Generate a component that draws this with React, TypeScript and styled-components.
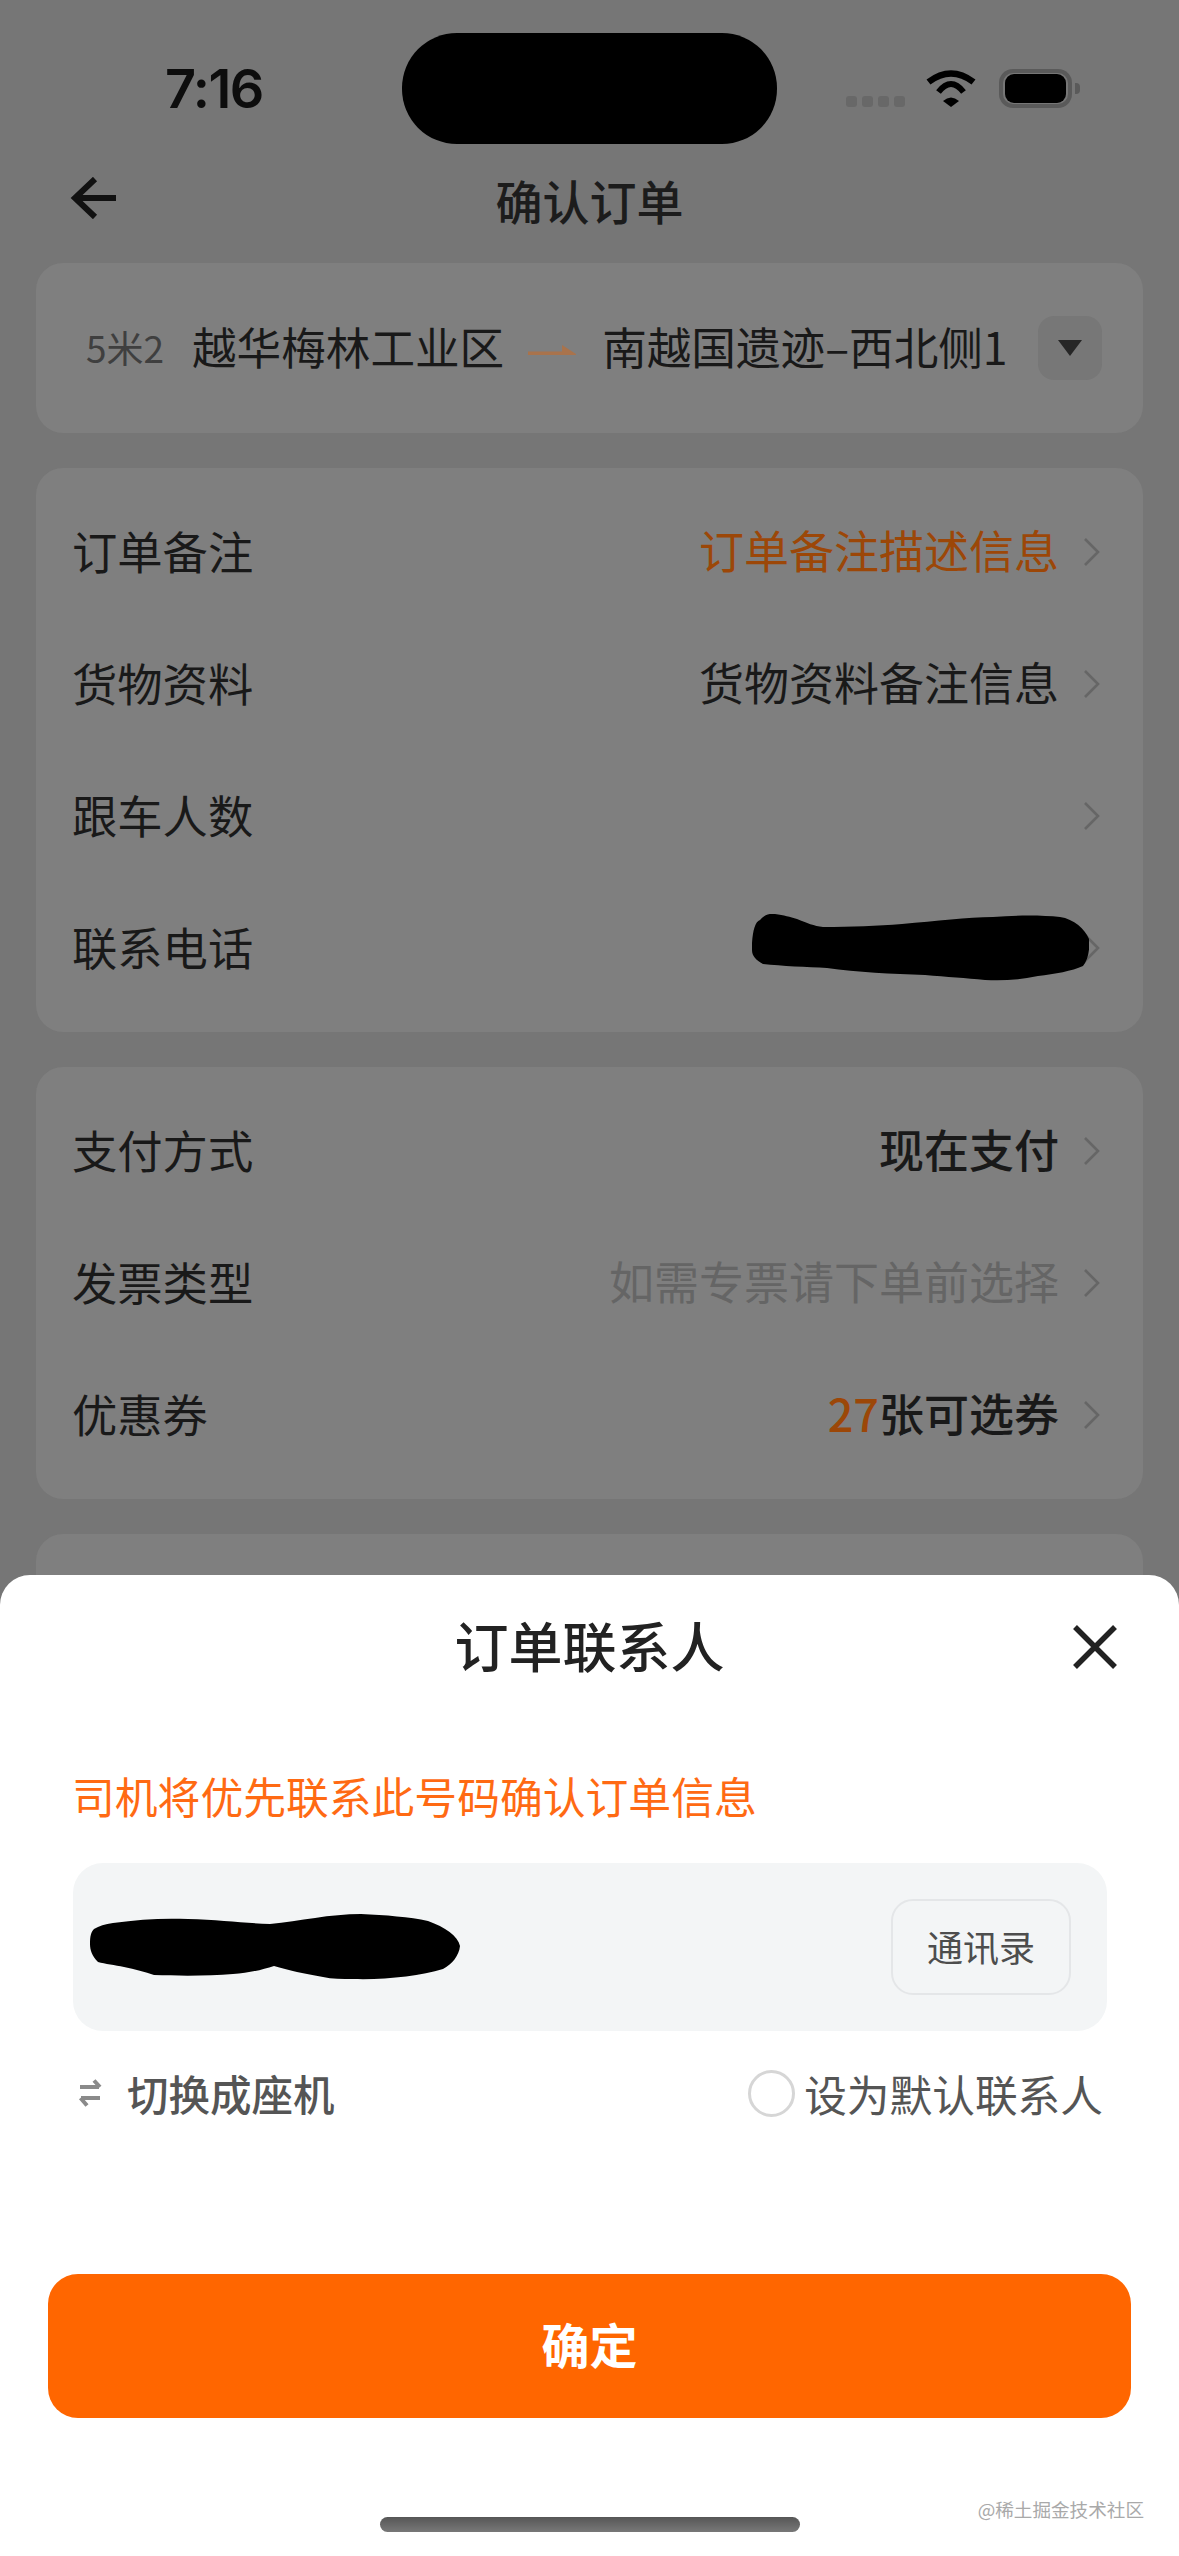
import React from "react";
import styled, { createGlobalStyle } from "styled-components";

const Global = createGlobalStyle`
  html, body { margin: 0; padding: 0; background: #767676; }
  * { box-sizing: border-box; }
  body { font-family: "Noto Sans CJK SC", "Noto Sans", sans-serif; }
`;

const Screen = styled.div`
  position: relative;
  width: 1179px;
  height: 2556px;
  overflow: hidden;
  background: #767676;
  color: #141414;
`;

/* ---------- status bar ---------- */
const StatusBar = styled.div`
  display: flex;
  align-items: center;
  height: 144px;
  padding-top: 33px;
`;
const Time = styled.div`
  width: 402px;
  padding-left: 165px;
  font-family: Inter, "Liberation Sans", sans-serif;
  font-size: 54px;
  font-weight: 600;
  letter-spacing: -1.5px;
  line-height: 1;
  color: #0d0d0d;
`;
const Island = styled.div`
  width: 375px;
  height: 111px;
  border-radius: 55px;
  background: #000;
`;
const StatusIcons = styled.div`
  display: flex;
  align-items: center;
  gap: 23px;
  padding-left: 69px;
`;
const SignalDots = styled.div`
  display: flex;
  gap: 5px;
  margin: 26px -2px 0 0;
`;
const SignalDot = styled.span`
  width: 11px;
  height: 11px;
  border-radius: 3px;
  background: #686868;
`;
const Battery = styled.div`
  position: relative;
  width: 73px;
  height: 39px;
  padding: 5px 6px;
  border-radius: 14px;
  box-shadow: inset 0 0 0 4px #5a5a5a;
`;
const BatteryFill = styled.div`
  width: 100%;
  height: 100%;
  border-radius: 9px;
  background: #000;
`;
const BatteryNub = styled.div`
  position: absolute;
  right: -8px;
  top: 14px;
  width: 5px;
  height: 11px;
  border-radius: 0 4px 4px 0;
  background: #5a5a5a;
`;

/* ---------- nav ---------- */
const NavBar = styled.div`
  position: relative;
  display: flex;
  align-items: center;
  justify-content: center;
  height: 116px;
  margin-bottom: 3px;
`;
const BackButton = styled.div`
  position: absolute;
  left: 70px;
  top: 33px;
  display: flex;
`;
const NavTitle = styled.div`
  margin-top: -5px;
  font-size: 47px;
  font-weight: 500;
  line-height: 60px;
  color: #1c1c1c;
`;

/* ---------- cards ---------- */
const Content = styled.div`
  display: flex;
  flex-direction: column;
  gap: 35px;
  padding: 0 36px;
`;
const Card = styled.div`
  padding: 18px 0;
  border-radius: 27px;
  background: #7f7f7f;
`;
const RouteCard = styled(Card)`
  display: flex;
  align-items: center;
  height: 170px;
  padding: 0 41px 0 50px;
`;
const Size = styled.span`
  width: 106px;
  margin-top: -3px;
  font-size: 37px;
  line-height: 44px;
  color: #3f3f3f;
`;
const Place = styled.span`
  margin-top: -4px;
  font-size: 44.6px;
  line-height: 60px;
  white-space: nowrap;
  color: #191919;
`;
const RouteArrow = styled.svg`
  margin: 4px 26px 0 24px;
  flex: none;
`;
const Expand = styled.div`
  display: flex;
  align-items: center;
  justify-content: center;
  width: 64px;
  height: 64px;
  margin-left: auto;
  border-radius: 16px;
  background: #777;
`;
const Row = styled.div`
  position: relative;
  display: flex;
  align-items: center;
  height: 132px;
  padding: 0 43px 0 36px;
`;
const Label = styled.span`
  margin-top: -4px;
  font-size: 45.3px;
  line-height: 60px;
  color: #191919;
`;
const Value = styled.span<{ $tone?: "accent" | "muted" | "strong" }>`
  margin: -4px 0 0 auto;
  font-size: 45px;
  line-height: 60px;
  font-weight: ${(p) => (p.$tone === "strong" ? 500 : 400)};
  color: ${(p) =>
    p.$tone === "accent" ? "#9c4708" : p.$tone === "muted" ? "#656565" : "#191919"};
`;
const Count = styled.span`
  color: #9c4708;
`;
const Chevron = styled.svg<{ $alone?: boolean }>`
  flex: none;
  margin-left: ${(p) => (p.$alone ? "auto" : "24px")};
`;
const PhoneBlot = styled.svg`
  position: absolute;
  left: 716px;
  top: 32px;
`;

/* ---------- sheet ---------- */
const Sheet = styled.div`
  position: absolute;
  left: 0;
  right: 0;
  top: 1575px;
  bottom: 0;
  display: flex;
  flex-direction: column;
  border-radius: 30px 30px 0 0;
  background: #fff;
`;
const SheetHeader = styled.div`
  position: relative;
  display: flex;
  align-items: center;
  justify-content: center;
  height: 144px;
`;
const SheetTitle = styled.div`
  margin-top: -5px;
  font-size: 54px;
  font-weight: 500;
  line-height: 70px;
  color: #222;
`;
const CloseButton = styled.div`
  position: absolute;
  left: 1073px;
  top: 50px;
  display: flex;
`;
const Hint = styled.div`
  margin: 46px 0 2px 72px;
  font-size: 42.8px;
  line-height: 60px;
  color: #ff6a13;
`;
const Field = styled.div`
  display: flex;
  align-items: center;
  justify-content: space-between;
  height: 168px;
  margin: 36px 72px 0 73px;
  padding: 0 36px 0 17px;
  border-radius: 30px;
  background: #f3f5f6;
`;
const BookButton = styled.div`
  display: flex;
  align-items: center;
  justify-content: center;
  width: 180px;
  height: 96px;
  padding-bottom: 3px;
  border: 2px solid #e4e6e8;
  border-radius: 22px;
  font-size: 36px;
  color: #4d4d4d;
`;
const Options = styled.div`
  display: flex;
  align-items: center;
  justify-content: space-between;
  height: 64px;
  margin-top: 30px;
  padding: 0 76px 0 78px;
`;
const Switch = styled.div`
  display: flex;
  align-items: center;
  gap: 25px;
  font-size: 41.5px;
  font-weight: 500;
  color: #555;
`;
const DefaultToggle = styled.div`
  display: flex;
  align-items: center;
  gap: 9px;
  font-size: 42.7px;
  color: #555;
`;
const Radio = styled.span`
  width: 47px;
  height: 47px;
  border: 3px solid #d6d6d6;
  border-radius: 50%;
`;
const ConfirmButton = styled.div`
  display: flex;
  align-items: center;
  justify-content: center;
  height: 144px;
  margin: 149px 48px 0;
  padding-bottom: 6px;
  border-radius: 30px;
  background: #ff6600;
  font-size: 48px;
  font-weight: 700;
  color: #fff;
`;
const HomeBar = styled.div`
  align-self: center;
  width: 420px;
  height: 15px;
  margin-top: 99px;
  border-radius: 8px;
  background: linear-gradient(#565656, #787878);
`;
const Watermark = styled.div`
  position: absolute;
  right: 35px;
  bottom: 36px;
  font-size: 18.6px;
  line-height: 22px;
  color: #a9a9a9;
`;

const ChevronIcon = ({ alone }: { alone?: boolean }) => (
  <Chevron $alone={alone} width="17" height="30" viewBox="0 0 17 30" fill="none">
    <path d="M2 2L15 15L2 28" stroke="#666" strokeWidth="2.6" />
  </Chevron>
);

const App = () => (
  <Screen>
    <Global />
    <StatusBar>
      <Time>7:16</Time>
      <Island />
      <StatusIcons>
        <SignalDots>
          <SignalDot />
          <SignalDot />
          <SignalDot />
          <SignalDot />
        </SignalDots>
        <svg width="50" height="37" viewBox="0 0 50 37" fill="none">
          <path d="M2.5 12Q25 -5 47.5 12" stroke="#000" strokeWidth="6.5" />
          <path d="M12.5 22Q25 6 37.5 22" stroke="#000" strokeWidth="6" />
          <path d="M17 31Q25 24 33 31L25 37Z" fill="#000" />
        </svg>
        <Battery>
          <BatteryFill />
          <BatteryNub />
        </Battery>
      </StatusIcons>
    </StatusBar>

    <NavBar>
      <BackButton>
        <svg width="46" height="42" viewBox="0 0 46 42" fill="none">
          <path d="M46 21H4M25 2L5 21L25 40" stroke="#111" strokeWidth="6" />
        </svg>
      </BackButton>
      <NavTitle>确认订单</NavTitle>
    </NavBar>

    <Content>
      <RouteCard>
        <Size>5米2</Size>
        <Place>越华梅林工业区</Place>
        <RouteArrow width="48" height="11" viewBox="0 0 48 11">
          <path d="M0 6.5H34V0L48 9V10H0Z" fill="#a9734c" />
        </RouteArrow>
        <Place>南越国遗迹–西北侧1</Place>
        <Expand>
          <svg width="24" height="16" viewBox="0 0 24 16">
            <path d="M0 0H24L12 16Z" fill="#262626" />
          </svg>
        </Expand>
      </RouteCard>

      <Card>
        <Row>
          <Label>订单备注</Label>
          <Value $tone="accent">订单备注描述信息</Value>
          <ChevronIcon />
        </Row>
        <Row>
          <Label>货物资料</Label>
          <Value>货物资料备注信息</Value>
          <ChevronIcon />
        </Row>
        <Row>
          <Label>跟车人数</Label>
          <ChevronIcon alone />
        </Row>
        <Row>
          <Label>联系电话</Label>
          <ChevronIcon alone />
          <PhoneBlot width="337" height="67" viewBox="0 0 337 67">
            <path
              d="M0 29C1 16 3 8 8 6C12 1 18 -1 23 0C32 1 38 3 45 5C55 9 62 12 71 13C100 13 125 12 150 10C185 7 215 3 241 3C265 1 290 1 308 3C322 5 333 15 337 25C338 36 336 46 331 52C320 57 303 60 286 62C268 66 250 67 233 66C214 64 195 63 173 61C140 60 105 58 75 54C55 53 30 52 11 50C4 46 0 42 0 36Z"
              fill="#000"
            />
          </PhoneBlot>
        </Row>
      </Card>

      <Card>
        <Row>
          <Label>支付方式</Label>
          <Value $tone="strong">现在支付</Value>
          <ChevronIcon />
        </Row>
        <Row>
          <Label>发票类型</Label>
          <Value $tone="muted">如需专票请下单前选择</Value>
          <ChevronIcon />
        </Row>
        <Row>
          <Label>优惠券</Label>
          <Value $tone="strong">
            <Count>27</Count>张可选券
          </Value>
          <ChevronIcon />
        </Row>
      </Card>

      <Card>
        <Row />
      </Card>
    </Content>

    <Sheet>
      <SheetHeader>
        <SheetTitle>订单联系人</SheetTitle>
        <CloseButton>
          <svg width="44" height="44" viewBox="0 0 44 44" fill="none">
            <path d="M2 2L42 42M42 2L2 42" stroke="#222" strokeWidth="5.5" />
          </svg>
        </CloseButton>
      </SheetHeader>
      <Hint>司机将优先联系此号码确认订单信息</Hint>
      <Field>
        <svg width="370" height="66" viewBox="0 0 370 66">
          <path
            d="M0 30C0 22 1 18 4 15C9 12 15 10 23 9C50 5 75 4 98 5C130 6 155 9 180 10C210 7 240 0 271 0C295 1 320 3 338 7C355 13 368 22 370 32C369 42 362 50 353 55C330 62 295 66 263 65C252 65 242 65 233 63C215 60 198 56 184 52C172 56 158 59 143 60C120 62 90 62 64 61C55 58 45 55 34 53C25 51 15 50 8 48C2 42 0 36 0 30Z"
            fill="#000"
          />
        </svg>
        <BookButton>通讯录</BookButton>
      </Field>
      <Options>
        <Switch>
          <svg width="24" height="29" viewBox="0 0 24 29" fill="none">
            <path d="M2 8H21M16 1.5L22 8" stroke="#8a8a8a" strokeWidth="4" />
            <path d="M22 19H3M2.5 19L9 26.5" stroke="#8a8a8a" strokeWidth="4" />
          </svg>
          切换成座机
        </Switch>
        <DefaultToggle>
          <Radio />
          设为默认联系人
        </DefaultToggle>
      </Options>
      <ConfirmButton>确定</ConfirmButton>
      <HomeBar />
      <Watermark>@稀土掘金技术社区</Watermark>
    </Sheet>
  </Screen>
);

export default App;
